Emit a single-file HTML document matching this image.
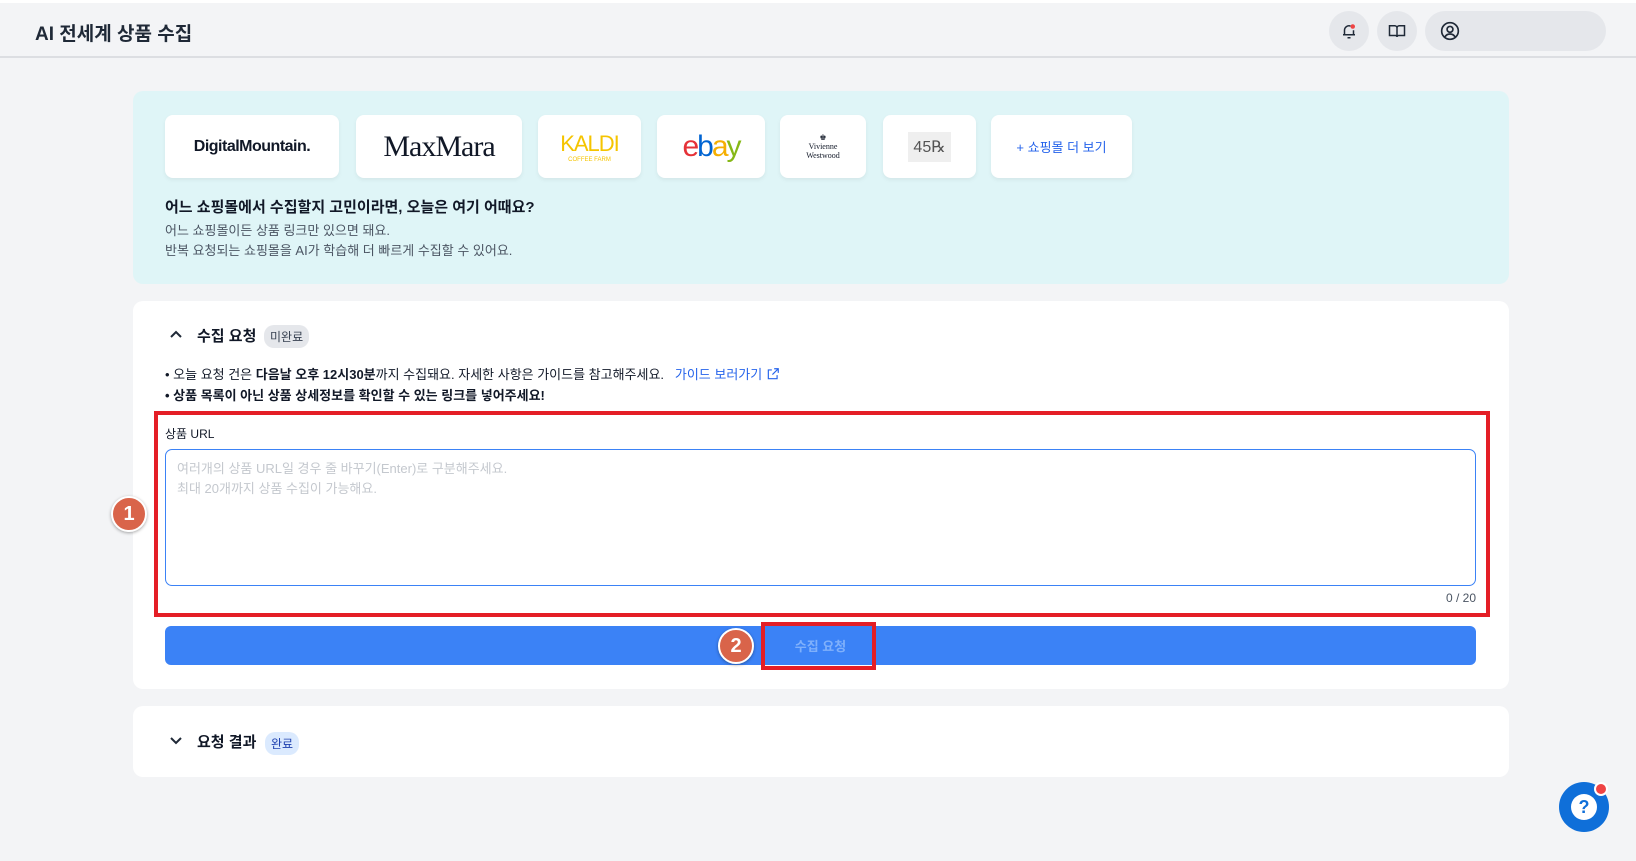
<!DOCTYPE html>
<html><head><meta charset="utf-8"><style>
*{box-sizing:border-box;margin:0;padding:0}
body{width:1636px;height:861px;background:#f3f4f6;font-family:"Liberation Sans","Noto Sans CJK KR",sans-serif;color:#111827;position:relative;overflow:hidden}
.abs{position:absolute}
.top{left:0;top:0;width:1636px;height:3px;background:#fff}
.hdr{left:0;top:3px;width:1636px;height:55px;border-bottom:2px solid #dcdee2}
.title{left:35px;top:19px;font-size:19px;font-weight:700;color:#1f2937}
.ic{width:40px;height:40px;border-radius:50%;background:#e5e7eb;top:11px;display:flex;align-items:center;justify-content:center}
.pill{left:1425px;top:11px;width:181px;height:40px;border-radius:20px;background:#e5e7eb}
.cyan{left:133px;top:91px;width:1376px;height:193px;background:#dff5f7;border-radius:10px}
.logo{top:115px;height:63px;background:#fff;border-radius:8px;box-shadow:0 2px 4px rgba(0,0,0,.06);display:flex;align-items:center;justify-content:center}
.card{left:133px;width:1376px;background:#fff;border-radius:10px}
.badge{font-size:12px;padding:3px 6px;border-radius:10px;background:#e5e7eb;color:#374151}
.red{border:4px solid #e41e26}
.num{width:36px;height:36px;border-radius:50%;background:#d9644a;border:2px solid #fff;box-shadow:0 1px 3px rgba(0,0,0,.35);color:#fff;font-weight:700;font-size:20px;display:flex;align-items:center;justify-content:center}
</style></head><body>
<div class="abs top"></div>
<div class="abs hdr"></div>
<div class="abs title">AI 전세계 상품 수집</div>
<div class="abs ic" style="left:1329px"><svg width="18" height="18" viewBox="0 0 24 24" fill="none" stroke="#1f2937" stroke-width="2"><path d="M6 17V11a6 6 0 0 1 8-5.6M18 11v6M4 17h16M10 21h4"/><circle cx="17" cy="6" r="3" fill="#ef4444" stroke="none"/></svg></div>
<div class="abs ic" style="left:1377px"><svg width="20" height="18" viewBox="0 0 24 24" fill="none" stroke="#1f2937" stroke-width="2"><path d="M2 5h7a3 3 0 0 1 3 3v12a2 2 0 0 0-2-2H2zM22 5h-7a3 3 0 0 0-3 3v12a2 2 0 0 1 2-2h8z"/></svg></div>
<div class="abs pill"></div>
<svg class="abs" style="left:1440px;top:21px" width="20" height="20" viewBox="0 0 24 24" fill="none" stroke="#1f2937" stroke-width="2"><circle cx="12" cy="12" r="10"/><circle cx="12" cy="10" r="3.5"/><path d="M6 19a7 7 0 0 1 12 0"/></svg>

<div class="abs cyan"></div>
<div class="abs logo" style="left:165px;width:174px;font-weight:700;font-size:16px;letter-spacing:-.5px">DigitalMountain.</div>
<div class="abs logo" style="left:356px;width:166px;font-family:'Liberation Serif',serif;font-size:30px;letter-spacing:-1px">MaxMara</div>
<div class="abs logo" style="left:538px;width:103px;flex-direction:column;color:#f5c400"><span style="font-size:22px;letter-spacing:-1px">KALDI</span><span style="font-size:6px">COFFEE FARM</span></div>
<div class="abs logo" style="left:657px;width:108px;font-size:30px;letter-spacing:-2px;font-weight:400"><span style="color:#e53238">e</span><span style="color:#0064d2">b</span><span style="color:#f5af02">a</span><span style="color:#86b817">y</span></div>
<div class="abs logo" style="left:780px;width:86px;font-family:'Liberation Serif',serif;font-size:8px;text-align:center;line-height:9px">♚<br>Vivienne<br>Westwood</div>
<div class="abs logo" style="left:883px;width:93px"><span style="background:#efefef;padding:5px 5px;font-size:16px;color:#555">45℞</span></div>
<div class="abs logo" style="left:991px;width:141px;color:#2563eb;font-size:13px">+ 쇼핑몰 더 보기</div>
<div class="abs" style="left:165px;top:196px;font-size:15px;font-weight:700">어느 쇼핑몰에서 수집할지 고민이라면, 오늘은 여기 어때요?</div>
<div class="abs" style="left:165px;top:221px;font-size:13px;color:#4b5563;line-height:20px">어느 쇼핑몰이든 상품 링크만 있으면 돼요.<br>반복 요청되는 쇼핑몰을 AI가 학습해 더 빠르게 수집할 수 있어요.</div>

<div class="abs card" style="top:301px;height:388px"></div>
<svg class="abs" style="left:169px;top:329px" width="14" height="10" viewBox="0 0 14 10" fill="none" stroke="#1f2937" stroke-width="2"><path d="M2 8l5-5 5 5"/></svg>
<div class="abs" style="left:197px;top:325px;font-size:15px;font-weight:700">수집 요청</div>
<div class="abs badge" style="left:264px;top:325px">미완료</div>
<div class="abs" style="left:165px;top:364px;font-size:13px;line-height:21px">• 오늘 요청 건은 <b>다음날 오후 12시30분</b>까지 수집돼요. 자세한 사항은 가이드를 참고해주세요. &nbsp;&nbsp;<span style="color:#2563eb">가이드 보러가기 <svg width="14" height="14" viewBox="0 0 24 24" fill="none" stroke="#2563eb" stroke-width="2" style="vertical-align:-2px"><path d="M14 3h7v7M21 3l-10 10M19 14v6H4V5h6"/></svg></span><br><b>• 상품 목록이 아닌 상품 상세정보를 확인할 수 있는 링크를 넣어주세요!</b></div>
<div class="abs red" style="left:154px;top:411px;width:1336px;height:206px"></div>
<div class="abs" style="left:165px;top:425px;font-size:12px">상품 URL</div>
<div class="abs" style="left:165px;top:449px;width:1311px;height:137px;border:1px solid #3b82f6;border-radius:7px;padding:9px 11px;font-size:13px;color:#c4c8ce;line-height:20px">여러개의 상품 URL일 경우 줄 바꾸기(Enter)로 구분해주세요.<br>최대 20개까지 상품 수집이 가능해요.</div>
<div class="abs" style="left:1420px;top:591px;width:56px;text-align:right;font-size:12px;color:#4b5563">0 / 20</div>
<div class="abs" style="left:165px;top:626px;width:1311px;height:39px;background:#3b82f6;border-radius:6px;color:#7fb0fb;font-size:13px;display:flex;align-items:center;justify-content:center;font-weight:700">수집 요청</div>
<div class="abs red" style="left:761px;top:622px;width:115px;height:48px"></div>
<div class="abs num" style="left:111px;top:496px">1</div>
<div class="abs num" style="left:718px;top:628px">2</div>

<div class="abs card" style="top:706px;height:71px"></div>
<svg class="abs" style="left:169px;top:736px" width="14" height="10" viewBox="0 0 14 10" fill="none" stroke="#1f2937" stroke-width="2"><path d="M2 2l5 5 5-5"/></svg>
<div class="abs" style="left:197px;top:731px;font-size:15px;font-weight:700">요청 결과</div>
<div class="abs badge" style="left:265px;top:732px;background:#dbeafe;color:#1e40af">완료</div>

<div class="abs" style="left:1559px;top:782px;width:50px;height:50px;border-radius:50%;background:#0f6fd9;display:flex;align-items:center;justify-content:center"><div style="width:26px;height:26px;border-radius:50%;background:#fff;color:#0f6fd9;font-weight:700;font-size:18px;text-align:center;line-height:26px">?</div></div>
<div class="abs" style="left:1594px;top:782px;width:14px;height:14px;border-radius:50%;background:#ef4444;border:2px solid #fff"></div>
</body></html>
